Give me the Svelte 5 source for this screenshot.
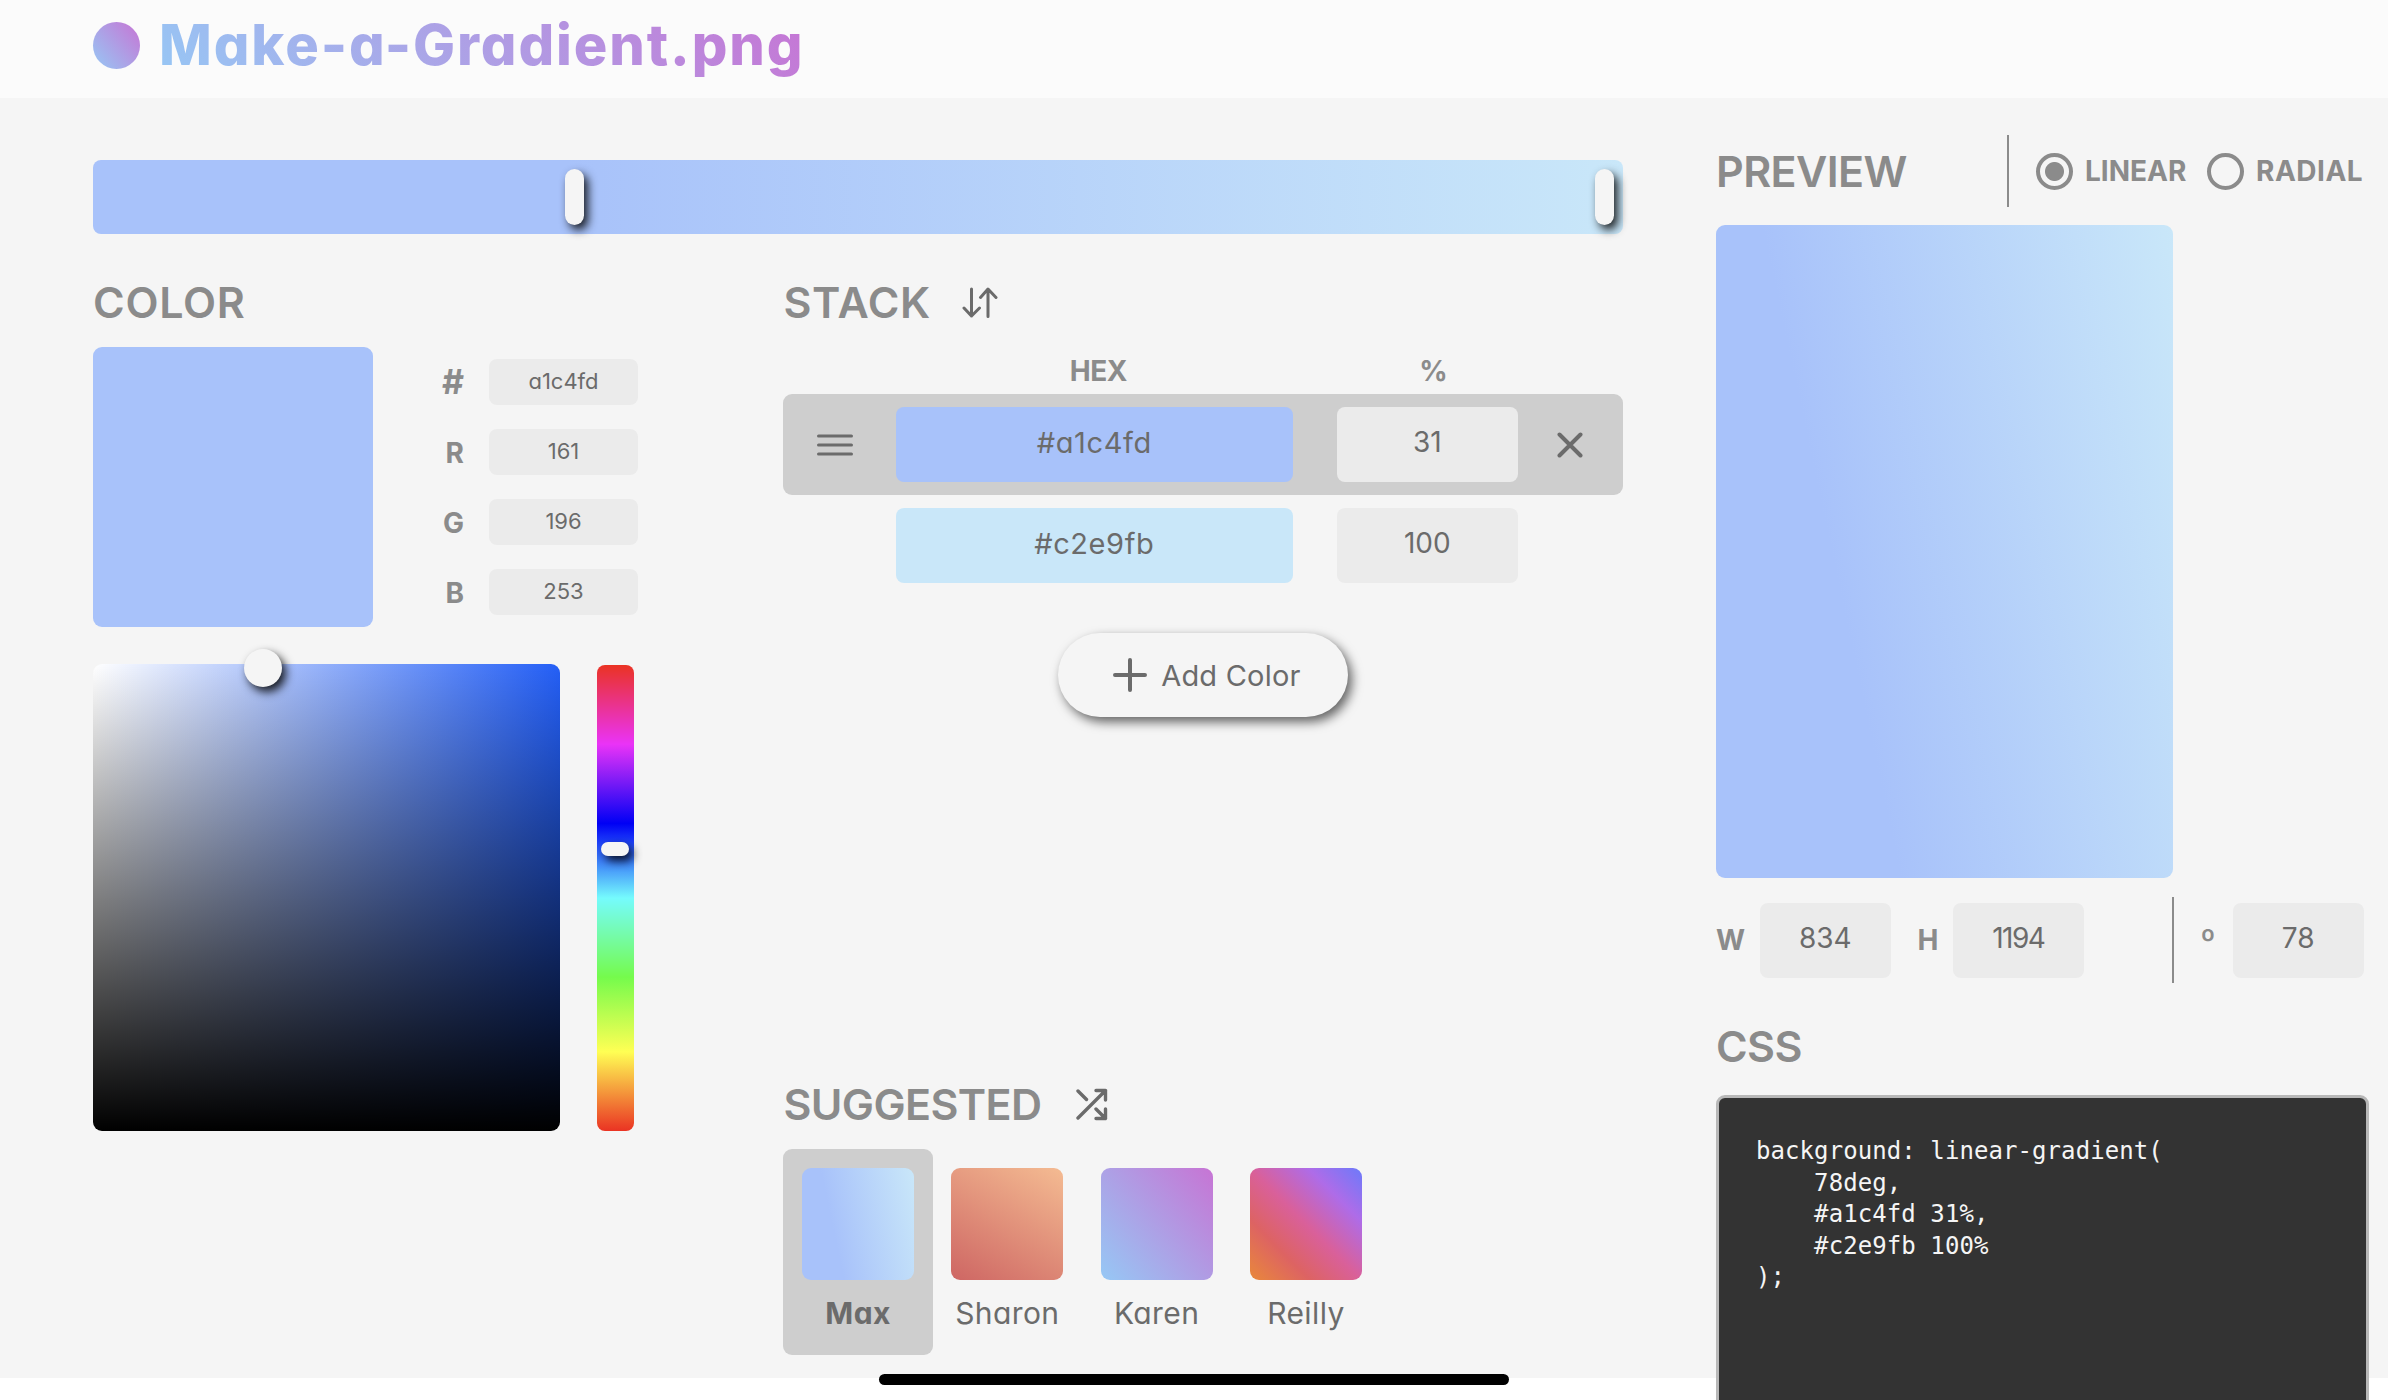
<script>
  const channels = [
    { label: '#', value: 'a1c4fd' },
    { label: 'R', value: '161' },
    { label: 'G', value: '196' },
    { label: 'B', value: '253' }
  ];
  const stack = [
    { hex: '#a1c4fd', pct: '31', tone: 'periwinkle', selected: true },
    { hex: '#c2e9fb', pct: '100', tone: 'sky', selected: false }
  ];
  const suggested = ['Max', 'Sharon', 'Karen', 'Reilly'];
  const css = `background: linear-gradient(
    78deg,
    #a1c4fd 31%,
    #c2e9fb 100%
);`;
</script>

<div class="screen">
  <div class="app">
    <header>
      <span class="logo"></span>
      <h1>Make-a-Gradient.png</h1>
    </header>

    <main>
      <div class="editor">
        <div class="track">
          <span class="handle first"></span>
          <span class="handle last"></span>
        </div>

        <div class="columns">
          <section class="color">
            <h2 class="wide">COLOR</h2>
            <div class="values">
              <div class="swatch"></div>
              <div class="channels">
                {#each channels as c}
                  <span class="bold name" class:hash={c.label === '#'}>{c.label}</span>
                  <div class="field small">{c.value}</div>
                {/each}
              </div>
            </div>
            <div class="pickers">
              <div class="shade"><span class="knob"></span></div>
              <div class="hue"><span class="pill"></span></div>
            </div>
          </section>

          <section class="stack">
            <h2 class="wide">
              STACK
              <svg class="sort" width="36" height="31" viewBox="0 0 36 31">
                <path d="M9.5 2V29M2 21L9.5 29L17.5 21M26 29.5V2.5M18.5 10.5L26 2L34 10.5" />
              </svg>
            </h2>
            <div class="grid labels bold">
              <span></span><span>HEX</span><span>%</span>
            </div>
            {#each stack as s}
              <div class="grid row" class:selected={s.selected}>
                <span class="grip">
                  {#if s.selected}
                    <svg width="36" height="22" viewBox="0 0 36 22"><path d="M1.5 2H34.5M1.5 11H34.5M1.5 20H34.5" /></svg>
                  {/if}
                </span>
                <div class="field hex {s.tone}">{s.hex}</div>
                <div class="field">{s.pct}</div>
                <span class="remove">
                  {#if s.selected}
                    <svg width="26" height="26" viewBox="0 0 26 26"><path d="M2.5 2.5L23.5 23.5M23.5 2.5L2.5 23.5" /></svg>
                  {/if}
                </span>
              </div>
            {/each}
            <button class="add">
              <svg width="34" height="34" viewBox="0 0 34 34"><path d="M17 2V32M2 17H32" /></svg>
              <span>Add Color</span>
            </button>

            <h2 class="suggested-title">
              SUGGESTED
              <svg class="shuffle" width="32" height="33" viewBox="0 0 32 33">
                <path d="M2 30L29.5 2.5M20 2.5H29.5V12M2 3L10.5 11.5M20 21L29.5 30.5M20 30.5H29.5V21" />
              </svg>
            </h2>
            <div class="cards">
              {#each suggested as name, i}
                <div class="card" class:active={i === 0}>
                  <div class="thumb {name.toLowerCase()}"></div>
                  <span>{name}</span>
                </div>
              {/each}
            </div>
          </section>
        </div>
      </div>

      <aside>
        <div class="preview-head">
          <h2>PREVIEW</h2>
          <span class="rule"></span>
          <span class="radio on"></span>
          <span class="mode bold">LINEAR</span>
          <span class="radio"></span>
          <span class="mode bold">RADIAL</span>
        </div>
        <div class="preview"></div>
        <div class="size bold">
          <span class="w">W</span>
          <div class="field">834</div>
          <span class="h">H</span>
          <div class="field tight">1194</div>
          <span class="rule"></span>
          <span class="deg">º</span>
          <div class="field">78</div>
        </div>
        <h2 class="css-title">CSS</h2>
        <pre>{css}</pre>
      </aside>
    </main>
  </div>
  <div class="home"></div>
</div>

<style>
  :global(body) {
    background: #fff;
    overflow: hidden;
  }
  .screen {
    position: relative;
    width: 2388px;
    height: 1400px;
    overflow: hidden;
    font-family: Inter, 'Open Sans', sans-serif;
    font-feature-settings: 'cv11';
    font-size: 28px;
    color: #6b6b6b;
  }
  .screen * {
    box-sizing: border-box;
  }
  .app {
    height: 1378px;
    background: #f5f5f5;
  }
  header {
    display: flex;
    align-items: center;
    height: 98px;
    padding: 0 0 8px 93px;
    gap: 19px;
    background: #fbfbfb;
  }
  .logo {
    width: 47px;
    height: 47px;
    border-radius: 50%;
    background: linear-gradient(50deg, #96c8f5, #c774d4);
  }
  h1 {
    margin: 0;
    font-size: 56px;
    line-height: 90px;
    font-weight: 800;
    letter-spacing: 1.9px;
    color: transparent;
    background: linear-gradient(50deg, #96c8f5, #c774d4);
    background-clip: text;
  }
  main {
    display: flex;
    height: 1280px;
  }
  .editor {
    display: flex;
    flex: none;
    flex-direction: column;
    width: 1530px;
    margin: 0 93px;
    padding: 62px 0 23px;
  }
  .track {
    position: relative;
    flex: none;
    height: 74px;
    border-radius: 8px;
    background: linear-gradient(90deg, #a8c2fa 31%, #c9e7f9);
  }
  .handle,
  .knob,
  .pill {
    position: absolute;
    background: #f5f5f5;
    box-shadow: 4px 5px 10px rgba(0, 0, 0, 0.85);
  }
  .handle {
    top: 9px;
    width: 19px;
    height: 56px;
    border-radius: 10px;
  }
  .handle.first {
    left: 472px;
  }
  .handle.last {
    left: 1502px;
  }
  .columns {
    display: flex;
    flex: 1;
    justify-content: space-between;
  }
  h2 {
    display: flex;
    align-items: center;
    flex: none;
    height: 46px;
    margin: 45px 0 22px;
    font-size: 43px;
    line-height: 46px;
    font-weight: 640;
    letter-spacing: -0.6px;
    color: #8b8b8b;
  }
  h2.wide {
    letter-spacing: 0.7px;
  }
  .bold {
    font-weight: 700;
    color: #8b8b8b;
  }
  svg {
    display: block;
    flex: none;
    fill: none;
    stroke: #6b6b6b;
    stroke-width: 3;
    stroke-linecap: round;
    stroke-linejoin: round;
  }
  .color {
    width: 545px;
  }
  .values {
    display: flex;
    justify-content: space-between;
    height: 280px;
  }
  .swatch {
    width: 280px;
    border-radius: 9px;
    background: #a8c2fa;
  }
  .channels {
    display: grid;
    grid-template-columns: 61px 149px;
    grid-template-rows: repeat(4, 46px);
    column-gap: 25px;
    row-gap: 24px;
    padding-top: 12px;
  }
  .name {
    line-height: 48px;
    text-align: right;
  }
  .hash {
    font-size: 34px;
    line-height: 46px;
  }
  .field {
    height: 75px;
    padding-bottom: 4px;
    border-radius: 8px;
    background: #ebebeb;
    line-height: 71px;
    text-align: center;
    font-weight: 400;
    color: #6b6b6b;
  }
  .field.small {
    height: 46px;
    padding-bottom: 2px;
    font-size: 22px;
    line-height: 44px;
  }
  .field.hex {
    font-size: 29px;
    letter-spacing: 0.6px;
  }
  .field.tight {
    letter-spacing: -1.5px;
  }
  .pickers {
    display: flex;
    gap: 37px;
    margin-top: 37px;
  }
  .shade {
    position: relative;
    width: 467px;
    height: 467px;
    border-radius: 9px;
    background: linear-gradient(to top, #000, transparent), linear-gradient(to right, #fff, #245ff6);
  }
  .knob {
    top: -15px;
    left: 151px;
    width: 38px;
    height: 38px;
    border-radius: 50%;
  }
  .hue {
    position: relative;
    width: 37px;
    height: 466px;
    margin-top: 1px;
    border-radius: 8px;
    background: linear-gradient(#ea3323, #ea33f7 17%, #0000f5 34%, #75fbfd 50%, #75fb4c 67%, #ffff54 83%, #ea3323);
  }
  .pill {
    top: 177px;
    left: 4px;
    width: 28px;
    height: 14px;
    border-radius: 7px;
  }
  .stack {
    display: flex;
    flex-direction: column;
    width: 839.6px;
  }
  .sort {
    margin-left: 31px;
    stroke-width: 3;
  }
  .grid {
    display: grid;
    grid-template-columns: 112.4px 397px 44px 181px 105px;
  }
  .grid > :nth-child(3) {
    grid-column: 4;
  }
  .labels {
    padding-top: 1px;
    line-height: 46px;
    text-align: center;
    letter-spacing: -0.5px;
  }
  .labels span {
    padding-left: 8px;
  }
  .labels span:last-child {
    padding-left: 12px;
  }
  .row {
    height: 101px;
    padding-top: 13px;
    border-radius: 9px;
  }
  .row.selected {
    background: #cecece;
  }
  .grip,
  .remove {
    display: flex;
    height: 75px;
    align-items: center;
    padding-left: 33.5px;
  }
  .remove {
    padding-left: 39.5px;
  }
  .remove svg {
    stroke-width: 4;
  }
  .field.periwinkle {
    background: #a8c2fa;
  }
  .field.sky {
    background: #c9e7f9;
  }
  .add {
    display: flex;
    align-items: center;
    align-self: center;
    flex: none;
    width: 290px;
    height: 84px;
    margin-top: 37px;
    padding: 0 0 0 55px;
    gap: 14px;
    border: 0;
    border-radius: 42px;
    background: #f5f5f5;
    box-shadow: 4px 5px 11px rgba(0, 0, 0, 0.6);
    font: inherit;
    font-size: 29px;
    letter-spacing: 0.2px;
    color: inherit;
    white-space: nowrap;
  }
  .add svg {
    stroke-width: 4;
  }
  .suggested-title {
    margin-top: auto;
  }
  .shuffle {
    margin-left: 34px;
    stroke-width: 3.4;
  }
  .cards {
    display: flex;
  }
  .card {
    width: 149.3px;
    height: 206px;
    padding: 19px 18.7px 0;
    border-radius: 9px;
    font-size: 30px;
    line-height: 67px;
    letter-spacing: 0.4px;
    text-align: center;
    white-space: nowrap;
  }
  .card.active {
    background: #cecece;
    font-weight: 700;
  }
  .thumb {
    height: 112px;
    border-radius: 9px;
  }
  .max,
  .preview {
    background: linear-gradient(78deg, #a8c2fa 31%, #c9e7f9);
  }
  .sharon {
    background: linear-gradient(30deg, #ce6663, #f4bb92);
  }
  .karen {
    background: linear-gradient(50deg, #96c8f5, #c774d4);
  }
  .reilly {
    background: linear-gradient(45deg, #e9883a, #dd6363 27%, #d9609a 50%, #ae6ce8 76%, #6c7afa);
  }
  aside {
    flex: none;
    width: 653px;
    padding-top: 37px;
  }
  .preview-head {
    display: flex;
    align-items: center;
    height: 72px;
    margin-bottom: 18px;
  }
  .preview-head h2 {
    width: 291px;
    margin: 0;
  }
  .rule {
    flex: none;
    width: 2px;
    height: 72px;
    background: #8b8b8b;
  }
  .radio {
    flex: none;
    width: 37px;
    height: 37px;
    border: 4px solid #8b8b8b;
    border-radius: 50%;
  }
  .radio.on {
    margin-left: 27px;
    background: radial-gradient(circle, #8b8b8b 9px, transparent 10px);
  }
  .mode {
    flex: none;
    width: 121px;
    padding-left: 12px;
    margin-right: 13px;
    font-weight: 660;
    white-space: nowrap;
  }
  .mode:last-child {
    margin-right: 0;
    letter-spacing: 0.5px;
  }
  .preview {
    width: 457px;
    height: 653px;
    border-radius: 9px;
  }
  .size {
    display: flex;
    align-items: center;
    height: 86px;
    margin-top: 19px;
  }
  .size .field {
    flex: none;
    width: 130.5px;
  }
  .size .w {
    width: 44px;
  }
  .size .h {
    width: 62.5px;
    padding-left: 27px;
  }
  .size .rule {
    height: 86px;
    margin-left: 88.5px;
  }
  .size .deg {
    width: 59px;
    padding-left: 26px;
    font-size: 32px;
    font-weight: 800;
  }
  .css-title {
    margin: 40px 0 26px;
  }
  pre {
    width: 653px;
    height: 400px;
    margin: 0;
    padding: 38px 37px;
    border: 3px solid #b8b8b8;
    border-radius: 9px;
    background: #333;
    font: 24px/31.6px 'DejaVu Sans Mono', monospace;
    letter-spacing: 0.08px;
    color: #f5f5f5;
  }
  .home {
    position: absolute;
    left: 879px;
    top: 1374px;
    width: 630px;
    height: 11px;
    border-radius: 6px;
    background: #000;
  }
</style>
